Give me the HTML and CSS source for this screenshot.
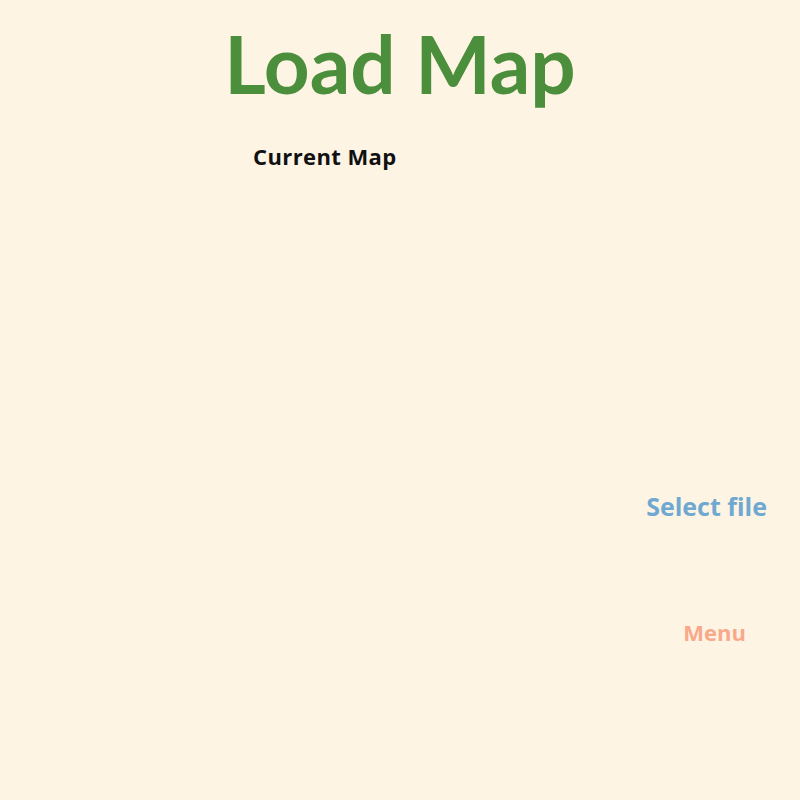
FILE: index.html
```html
<!DOCTYPE html>
<html>
<head>
<meta charset="utf-8">
<link rel="stylesheet" href="styles.css">
<title>Load Map</title>
</head>
<body>
<main class="page">
  <h1 class="title">Load Map</h1>
  <section class="current">
    <h2 class="current-label">Current Map</h2>
  </section>
  <div class="actions">
    <a class="select-file">Select file</a>
    <a class="menu">Menu</a>
  </div>
</main>
</body>
</html>
```
FILE: styles.css
```css
html, body {
  margin: 0;
  padding: 0;
  background: #fef4e4;
  height: 100%;
}
.page {
  width: 800px;
  height: 800px;
  display: flex;
  flex-direction: column;
  font-family: "Open Sans", "Noto Sans", sans-serif;
}
.title {
  margin: 18px 0 0;
  text-align: center;
  font-family: "Lato", "Open Sans", sans-serif;
  font-weight: 700;
  font-size: 80px;
  line-height: 90px;
  color: #4b8e3b;
}
.current {
  padding-left: 253px;
  margin-top: 33px;
}
.current-label {
  margin: 0;
  font-size: 22px;
  line-height: 30px;
  font-weight: 700;
  letter-spacing: 0.4px;
  color: #111;
}
.actions {
  display: flex;
  flex-direction: column;
  align-items: flex-end;
  margin-top: 320px;
  padding-right: 33px;
}
.select-file {
  font-size: 25px;
  line-height: 30px;
  font-weight: 700;
  color: #6fa8d0;
}
.menu {
  margin-top: 96px;
  margin-right: 21px;
  font-size: 22px;
  line-height: 30px;
  font-weight: 700;
  color: #f9a98b;
}
```
